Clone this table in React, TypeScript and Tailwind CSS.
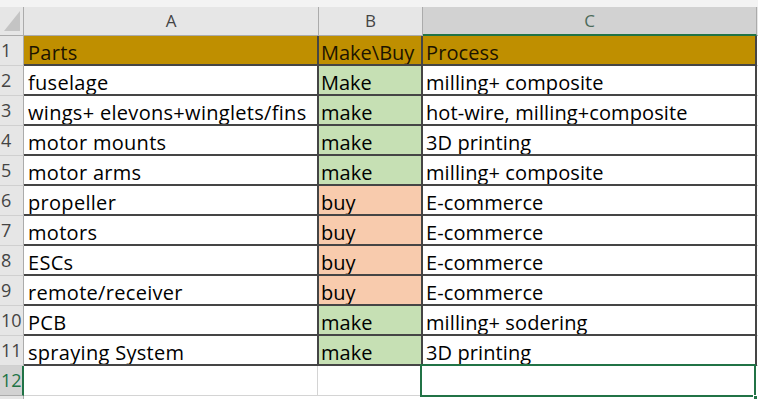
type Row = { a: string; b: string; c: string; kind: "head" | "make" | "buy" };

const rows: Row[] = [
  { a: "Parts", b: "Make\\Buy", c: "Process", kind: "head" },
  { a: "fuselage", b: "Make", c: "milling+ composite", kind: "make" },
  { a: "wings+ elevons+winglets/fins", b: "make", c: "hot-wire, milling+composite", kind: "make" },
  { a: "motor mounts", b: "make", c: "3D printing", kind: "make" },
  { a: "motor arms", b: "make", c: "milling+ composite", kind: "make" },
  { a: "propeller", b: "buy", c: "E-commerce", kind: "buy" },
  { a: "motors", b: "buy", c: "E-commerce", kind: "buy" },
  { a: "ESCs", b: "buy", c: "E-commerce", kind: "buy" },
  { a: "remote/receiver", b: "buy", c: "E-commerce", kind: "buy" },
  { a: "PCB", b: "make", c: "milling+ sodering", kind: "make" },
  { a: "spraying System", b: "make", c: "3D printing", kind: "make" },
];

const cell =
  "h-[30px] flex items-end leading-[22px] whitespace-nowrap overflow-hidden border-r-2 border-b-2 border-[#454545]";

const App = () => {
  return (
    <div className="w-[758px] h-[399px] overflow-hidden bg-white text-[20px] tracking-[0.3px] text-black font-['Open_Sans',sans-serif]">
      {/* top strip */}
      <div className="h-[7px] bg-[#f3f3f3]" />

      {/* COLUMN HEADERS */}
      <div className="flex h-[29px] text-[17px] tracking-normal text-[#444]">
        <div className="w-[24px] shrink-0 bg-[#e6e6e6] border-r border-b border-[#ababab] flex items-end justify-end pr-[3px] pb-[4px]">
          <svg width="16" height="20" viewBox="0 0 16 20">
            <polygon points="16,0 16,20 0,20" fill="#c4c4c4" />
          </svg>
        </div>
        <div className="w-[295px] shrink-0 bg-[#e6e6e6] border-r border-b border-[#ababab] flex items-center justify-center">
          A
        </div>
        <div className="w-[104px] shrink-0 bg-[#e6e6e6] border-r border-b border-[#ababab] flex items-center justify-center">
          B
        </div>
        <div className="w-[334px] shrink-0 bg-[#d2d2d2] border-r border-[#ababab] border-b-2 border-b-[#217346] flex items-center justify-center text-[#4b6b5a]">
          C
        </div>
        <div className="flex-1 bg-[#e6e6e6] border-b border-[#ababab]" />
      </div>

      {/* DATA ROWS */}
      {rows.map((r, i) => {
        const fillA = r.kind === "head" ? "bg-[#bf8f00]" : "bg-white";
        const fillB =
          r.kind === "head" ? "bg-[#bf8f00]" : r.kind === "make" ? "bg-[#c6e0b4]" : "bg-[#f8cbad]";
        const fillC = r.kind === "head" ? "bg-[#bf8f00]" : "bg-white";
        const tone = r.kind === "head" ? "text-[#1c1400]" : "";
        return (
          <div className="flex" key={i}>
            <div className="w-[24px] shrink-0 h-[30px] bg-[#e6e6e6] border-r border-b border-r-[#ababab] border-b-[#d0d0d0] flex items-center pl-[1px] text-[18px] tracking-normal text-[#444] overflow-hidden">
              {i + 1}
            </div>
            <div className={`w-[295px] shrink-0 pl-[4px] ${cell} ${fillA} ${tone}`}>{r.a}</div>
            <div className={`w-[104px] shrink-0 pl-[2px] tracking-normal ${cell} ${fillB} ${tone}`}>{r.b}</div>
            <div className={`w-[334px] shrink-0 pl-[3px] tracking-[0.1px] ${cell} ${fillC} ${tone}`}>{r.c}</div>
            <div className="flex-1 h-[30px] border-b border-[#d4d4d4]" />
          </div>
        );
      })}

      {/* ROW 12 (active cell C12) */}
      <div className="flex">
        <div className="w-[24px] shrink-0 h-[30px] bg-[#d2d2d2] border-r-2 border-r-[#217346] border-b border-b-[#ababab] flex items-center pl-[1px] text-[18px] tracking-normal text-[#217346] overflow-hidden">
          12
        </div>
        <div className="w-[294px] shrink-0 h-[30px] border-r border-b border-[#d4d4d4]" />
        <div className="w-[104px] shrink-0 h-[30px] border-r border-b border-[#d4d4d4]" />
        <div className="relative w-[334px] shrink-0 h-[30px]">
          <div className="absolute -left-[2px] -top-[2px] right-[0px] -bottom-[1px] border-2 border-[#217346]" />
          <div className="absolute -right-[2px] -bottom-[4px] w-[5px] h-[5px] bg-[#217346] border border-white" />
        </div>
        <div className="flex-1 h-[30px] border-b border-[#d4d4d4]" />
      </div>

      {/* ROW 13 (cut) */}
      <div className="flex">
        <div className="w-[24px] shrink-0 h-[30px] bg-[#e6e6e6] border-r border-[#ababab]" />
      </div>
    </div>
  );
};

export default App;
